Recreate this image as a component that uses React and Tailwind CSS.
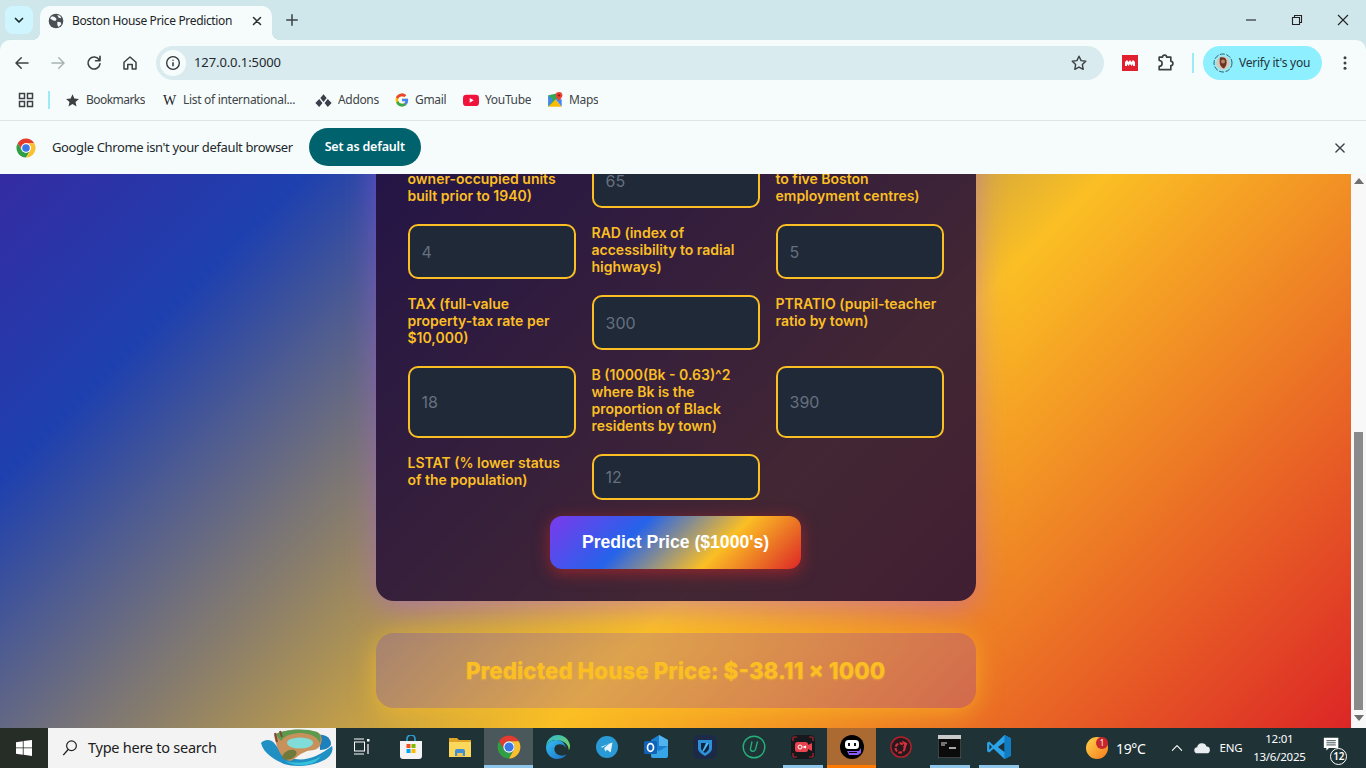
import React from "react";

const Ic = ({ s = 16, v = "0 0 24 24", children, className = "" }) => (
  <svg width={s} height={s} viewBox={v} className={`shrink-0 ${className}`}>{children}</svg>
);
const Line = ({ d, c = "#3c4043", w = 2 }) => (
  <path d={d} fill="none" stroke={c} strokeWidth={w} strokeLinecap="round" strokeLinejoin="round" />
);

const ChromeLogo = ({ s = 24 }) => (
  <Ic s={s} v="3 3 42 42">
    <path d="M41.32 14A20 20 0 0 0 6.68 14L15.34 29A10 10 0 0 1 24 14Z" fill="#e33b2e" />
    <path d="M6.68 14A20 20 0 0 0 24 44L32.66 29A10 10 0 0 1 15.34 29Z" fill="#2f9e44" />
    <path d="M41.32 14A20 20 0 0 1 24 44L32.66 29A10 10 0 0 0 24 14Z" fill="#fbc02d" />
    <circle cx="24" cy="24" r="10" fill="#fff" />
    <circle cx="24" cy="24" r="8" fill="#3b78e7" />
  </Ic>
);

const Globe = () => (
  <Ic s={16}>
    <circle cx="12" cy="12" r="11" fill="#4a4f54" />
    <path d="M6 5l4 1 3 3-2 3-4-1-4-3zM14 13l5 1 1 3-4 4-2-3z" fill="#f6fcfc" />
    <path d="M14 3l4 1 2 4-4-1z" fill="#f6fcfc" />
  </Ic>
);

const Edge = () => (
  <Ic s={26} v="0 0 48 48">
    <defs>
      <linearGradient id="e1" x1="0" y1="0" x2="1" y2="1"><stop offset="0" stopColor="#35c1f1" /><stop offset="1" stopColor="#1b6fc8" /></linearGradient>
      <linearGradient id="e2" x1="0" y1="0" x2="1" y2="1"><stop offset="0" stopColor="#2bb7d8" /><stop offset="1" stopColor="#7fd84a" /></linearGradient>
    </defs>
    <path d="M24 2C12 2 3 11 2 23c3-8 10-12 18-12 10 0 24 5 24 19 3-4 2-9 2-10C44 10 35 2 24 2z" fill="url(#e2)" />
    <path d="M2 23c-1 12 8 23 21 23 7 0 13-3 17-8-8 4-19 2-22-6-2-5 0-10 4-12 4-2 14-2 16 6 1-6-6-15-16-15C13 11 4 16 2 23z" fill="url(#e1)" />
  </Ic>
);

const Telegram = () => (
  <Ic s={22} v="0 0 24 24">
    <circle cx="12" cy="12" r="12" fill="#2a9ad6" />
    <path d="M5 12l13-5-2 11-4-3-2 2-1-4 6-5-8 4.5z" fill="#e8f5fc" />
  </Ic>
);

const Outlook = () => (
  <Ic s={26} v="0 0 26 26">
    <path d="M8 6l8-5 9 5v14a2 2 0 0 1-2 2H10a2 2 0 0 1-2-2z" fill="#1c7fd0" />
    <path d="M16 1l9 5v6h-9z" fill="#50b4ef" />
    <path d="M8 12l8 5 9-5v10a2 2 0 0 1-2 2H10a2 2 0 0 1-2-2z" fill="#35a5e8" />
    <rect x="1" y="7" width="13" height="13" rx="1.5" fill="#0f62b5" />
    <ellipse cx="7.5" cy="13.5" rx="3" ry="3.8" fill="none" stroke="#fff" strokeWidth="1.7" />
  </Ic>
);

const Shield = () => (
  <Ic s={24} v="0 0 24 24">
    <rect width="24" height="24" rx="6" fill="#1c2a48" />
    <path d="M5 5h14v8c0 4-4 6-7 8-3-2-7-4-7-8z" fill="#2b90d9" />
    <path d="M8 8h8v5c0 2-2 3.5-4 5-2-1.5-4-3-4-5z" fill="#10243f" />
    <path d="M13 8l3 0-5 8-2 1z" fill="#4fb8f2" />
  </Ic>
);

const UIcon = () => (
  <Ic s={24} v="0 0 24 24">
    <circle cx="12" cy="12" r="10.8" fill="none" stroke="#25b07a" strokeWidth="1.4" />
    <path d="M10 6.5l-1.5 7c-.5 3 3.5 4 5 1l2-8" fill="none" stroke="#25b07a" strokeWidth="1.3" />
  </Ic>
);

const Rec = () => (
  <Ic s={24} v="0 0 24 24">
    <rect width="24" height="24" rx="5" fill="#17181c" />
    <path d="M2 6V3a1 1 0 0 1 1-1h3M18 2h3a1 1 0 0 1 1 1v3M22 18v3a1 1 0 0 1-1 1h-3M6 22H3a1 1 0 0 1-1-1v-3" fill="none" stroke="#b8242f" strokeWidth="1.2" />
    <rect x="4" y="7" width="13" height="10" rx="2.5" fill="#e8434f" />
    <path d="M17 10l4-2v8l-4-2z" fill="#e8434f" />
    <circle cx="9" cy="12" r="2" fill="none" stroke="#fff" strokeWidth="1" />
    <path d="M11 12l4-1.5v3z" fill="#fff" />
  </Ic>
);

const Bot = () => (
  <Ic s={24} v="0 0 24 24">
    <circle cx="12" cy="12" r="12" fill="#000" />
    <rect x="5" y="5" width="14" height="9" rx="3.5" fill="#fff" />
    <rect x="8" y="8" width="2" height="3" fill="#111" />
    <rect x="14" y="8" width="2" height="3" fill="#111" />
    <path d="M7 16h12l2-3v5l-3 2H9z" fill="#8b5cf6" />
    <path d="M9 17.500h8" stroke="#000" strokeWidth="1" />
  </Ic>
);

const Virus = () => (
  <Ic s={22} v="0 0 24 24">
    <circle cx="12" cy="12" r="11" fill="#26191d" stroke="#b3202a" strokeWidth="1.6" />
    <circle cx="11" cy="13" r="5" fill="none" stroke="#d8303a" strokeWidth="2.4" strokeDasharray="4 1.6" />
    <path d="M13 5l6 3-2 5z" fill="#d8303a" />
  </Ic>
);

const Cmd = () => (
  <Ic s={23} v="0 0 23 23">
    <rect width="23" height="23" fill="#0b0b0b" stroke="#777" strokeWidth="1" />
    <rect width="23" height="4" fill="#c9c9c9" />
    <path d="M3 8h6M3 10h4" stroke="#ddd" strokeWidth="1.2" />
    <path d="M11 13h7" stroke="#eee" strokeWidth="1.4" />
  </Ic>
);

const VSCode = () => (
  <Ic s={26} v="0 0 24 24">
    <path d="M17 1l6 3v16l-6 3L7 13.5 3 17l-2-1V8l2-1 4 3.5z" fill="#2aa3e8" />
    <path d="M17 1l6 3v16l-6 3z" fill="#0f7cc4" />
    <path d="M17 7.5L11 12l6 4.5z" fill="#1f2f33" />
    <path d="M3.2 9.5L5.5 12l-2.3 2.5z" fill="#1f2f33" />
  </Ic>
);

const Store = () => (
  <Ic s={24} v="0 0 24 24">
    <path d="M8 6V4a4 4 0 0 1 8 0v2" fill="none" stroke="#2b9fd8" strokeWidth="1.6" />
    <path d="M1 6h22v15a3 3 0 0 1-3 3H4a3 3 0 0 1-3-3z" fill="#f4f4f4" />
    <rect x="7.5" y="9" width="4" height="4" fill="#f25022" />
    <rect x="12.5" y="9" width="4" height="4" fill="#7fba00" />
    <rect x="7.5" y="14" width="4" height="4" fill="#00a4ef" />
    <rect x="12.5" y="14" width="4" height="4" fill="#ffb900" />
  </Ic>
);

const Folder = () => (
  <Ic s={24} v="0 0 24 24">
    <path d="M1 3h8l2 2h12v17H1z" fill="#e0a526" />
    <path d="M1 7h22v15H1z" fill="#fbd75b" />
    <path d="M7 21v-5a2 2 0 0 1 2-2h6a2 2 0 0 1 2 2v5h-2.5v-3h-5v3z" fill="#3f8fd6" />
    <rect x="9.5" y="18" width="5" height="4" fill="#f4c64a" />
  </Ic>
);

const TaskView = () => (
  <Ic s={18} v="0 0 18 18">
    <path d="M1 1h10M1 16h10" stroke="#fff" strokeWidth="1" />
    <rect x="1.5" y="4" width="10" height="9" fill="none" stroke="#fff" strokeWidth="1" />
    <rect x="14" y="1" width="2.5" height="2.5" fill="#fff" />
    <path d="M15 6v10" stroke="#fff" strokeWidth="1.2" />
  </Ic>
);

const Island = () => (
  <svg width="72" height="38" viewBox="0 0 72 38" className="shrink-0">
    <path d="M0 14c5-5 11-3 14 1 4 5 8 12 20 15 12 2 24-3 37-13 2 5-2 12-10 15-12 6-28 6-38 3C14 31 2 24 0 14z" fill="#1f8fc4" />
    <path d="M24 32c10 3 26 2 36-5-4 8-16 10-24 9-5-1-9-2-12-4z" fill="#35c0dc" />
    <path d="M58 6c6-1 12 3 12 9 0 3-6 6-11 6z" fill="#1d7fbc" />
    <path d="M13 6C20 1 42 -1 56 3c6 2 6 10 2 15-4 5-10 2-14 5-8 3-10 8-15 9-7-1-13-10-16-26z" fill="#c8915c" />
    <path d="M15 5C25 0 44 -1 56 3c4 2 4 6 3 11-3-6-8-9-18-10-9 0-17 2-21 8-2-2-4-5-5-7z" fill="#5d9a4e" />
    <path d="M14 4l2 9M19 2l2 6" stroke="#7a4a3a" strokeWidth="2" />
    <ellipse cx="39" cy="14" rx="13" ry="5.500" fill="#7fdcd8" />
    <path d="M21 29c1-6 7-9 12-8 4 1 3 5 0 7-3 3-8 4-12 1z" fill="#6d7a3c" />
  </svg>
);

const GoogleG = () => (
  <Ic s={14} v="0 0 48 48">
    <path d="M44.5 20H24v8.5h11.8C34.7 33.9 30.1 37 24 37c-7.2 0-13-5.8-13-13s5.8-13 13-13c3.1 0 5.9 1.1 8.1 2.9l6.4-6.4C34.6 4.1 29.6 2 24 2 11.8 2 2 11.8 2 24s9.8 22 22 22c11 0 21-8 21-22 0-1.3-.2-2.7-.5-4z" fill="#fbbc05" />
    <path d="M3.2 14.7l7 5.1C12.1 15 17.6 11 24 11c3.1 0 5.9 1.1 8.1 2.9l6.4-6.4C34.6 4.1 29.6 2 24 2 15.6 2 8.4 6.7 3.2 14.7z" fill="#ea4335" />
    <path d="M24 46c5.5 0 10.4-1.8 14.3-5.1l-6.9-5.7C29.4 36.4 26.9 37 24 37c-5.9 0-10.9-3.8-12.6-9.2L4.2 33.3C7.6 41 15.2 46 24 46z" fill="#34a853" />
    <path d="M44.5 20H24v8.5h11.8c-.6 2.7-2.3 5-4.4 6.7l6.9 5.7C42.3 37.3 45 31.4 45 24c0-1.3-.2-2.7-.5-4z" fill="#4285f4" />
  </Ic>
);

const Maps = () => (
  <Ic s={16} v="0 0 24 24">
    <path d="M2 5l14-3v9L2 22z" fill="#34a853" />
    <path d="M2 5l7 7-7 10z" fill="#4285f4" />
    <path d="M2 22l11-11 9 11z" fill="#fbbc05" />
    <path d="M13 11l9 11V11z" fill="#4285f4" />
    <path d="M18 0a5 5 0 0 1 5 5c0 4-5 8-5 8s-5-4-5-8a5 5 0 0 1 5-5z" fill="#ea4335" />
    <circle cx="18" cy="5" r="1.8" fill="#8a1f16" />
  </Ic>
);

const Avatar = () => (
  <Ic s={20} v="0 0 20 20">
    <circle cx="10" cy="10" r="9" fill="none" stroke="#3f5a62" strokeWidth="1" strokeDasharray="5 1.5" />
    <circle cx="10" cy="10" r="6.8" fill="#d8c8b8" />
    <path d="M7 4.5c3-1 6 0 6.5 3 .6 3-.5 6-2.5 8-2-.5-3-2-4-4-.5-2-.5-5 0-7z" fill="#6b3324" />
    <circle cx="10" cy="8.5" r="2" fill="#b88467" />
  </Ic>
);

const Bookmark = ({ w, icon, label, t = "tracking-[-0.33px]" }) => (
  <div className={`flex items-center gap-[6px] ${w}`}>
    {icon}
    <span className={`truncate text-[12px] text-[#3f4447] ${t}`}>{label}</span>
  </div>
);

const taskIcons = [
  { i: <TaskView /> },
  { i: <Store /> },
  { i: <Folder /> },
  { i: <ChromeLogo s={24} />, bg: "bg-[#4a585c]", bar: "w-full bg-[#90c5ea]" },
  { i: <Edge /> },
  { i: <Telegram /> },
  { i: <Outlook /> },
  { i: <Shield /> },
  { i: <UIcon /> },
  { i: <Rec />, bar: "w-10 bg-[#90c5ea]" },
  { i: <Bot />, bg: "bg-[#ac6a33]", bar: "w-full bg-[#ff7a00]" },
  { i: <Virus /> },
  { i: <Cmd />, bar: "w-10 bg-[#90c5ea]" },
  { i: <VSCode />, bar: "w-10 bg-[#90c5ea]" },
];

const Field = ({ label, ph }) => (
  <>
    <label className="pb-1 text-[14px] font-semibold leading-[17px] text-[#fbbf24]">{label}</label>
    <input
      placeholder={ph}
      className="w-full min-w-0 rounded-[10px] border-2 border-[#fbbf24] bg-[#1f2937] px-3 py-[9px] text-[16px] text-white outline-none placeholder:text-[#667080]"
    />
  </>
);

export default function App() {
  return (
    <div className="flex h-screen w-full flex-col overflow-hidden bg-[#cfe6ea] font-['Noto_Sans',sans-serif]">
      {/* tab strip */}
      <div className="flex h-10 shrink-0 bg-[#cfe6ea]">
        <div className="ml-[5px] mt-[6px] flex h-7 w-7 items-center justify-center rounded-lg bg-[#cff6fe]">
          <Ic s={12}><Line d="M5 9l7 7 7-7" c="#1f2a30" w={3.5} /></Ic>
        </div>
        <div className="relative ml-[7px] mt-[6px] flex h-[34px] w-[232px] items-center rounded-t-[10px] bg-[#f6fcfc] pb-1 pl-2 pr-2">
          <div className="absolute bottom-0 -left-2 h-2 w-2 bg-[radial-gradient(circle_at_0_0,transparent_8px,#f6fcfc_8px)]" />
          <div className="absolute bottom-0 -right-2 h-2 w-2 bg-[radial-gradient(circle_at_100%_0,transparent_8px,#f6fcfc_8px)]" />
          <Globe />
          <span className="ml-2 flex-1 truncate text-[12px] tracking-[-0.35px] text-[#1f2428]">Boston House Price Prediction</span>
          <Ic s={14}><Line d="M6 6l12 12M18 6L6 18" c="#2a2f33" w={2.6} /></Ic>
        </div>
        <div className="ml-[13px] mt-[13px] h-[14px]">
          <Ic s={14}><Line d="M12 3v18M3 12h18" c="#3c4448" w={2.6} /></Ic>
        </div>
        <div className="ml-auto flex">
          <div className="flex h-10 w-[46px] items-center justify-center pb-[1px]">
            <Ic s={12} v="0 0 12 12"><path d="M1 6h10" stroke="#222" strokeWidth="1.1" /></Ic>
          </div>
          <div className="flex h-10 w-[46px] items-center justify-center pb-[1px]">
            <Ic s={12} v="0 0 12 12"><path d="M1.5 3.5h7v7h-7zM3.5 3.5v-2h7v7h-2" fill="none" stroke="#222" strokeWidth="1.1" /></Ic>
          </div>
          <div className="flex h-10 w-[46px] items-center justify-center pb-[1px]">
            <Ic s={12} v="0 0 12 12"><path d="M1 1l10 10M11 1L1 11" stroke="#222" strokeWidth="1.1" /></Ic>
          </div>
        </div>
      </div>

      {/* toolbar */}
      <div className="flex h-11 shrink-0 items-center rounded-tl-[10px] rounded-tr-[10px] bg-[#f6fcfc] pl-1 pt-[2px]">
        <div className="flex h-9 w-9 items-center justify-center"><Ic s={18}><Line d="M20 12H5M11 5l-7 7 7 7" /></Ic></div>
        <div className="flex h-9 w-9 items-center justify-center"><Ic s={18}><Line d="M4 12h15M13 5l7 7-7 7" c="#a9b2b4" /></Ic></div>
        <div className="flex h-9 w-9 items-center justify-center"><Ic s={18}><Line d="M19 8a8 8 0 1 0 1 5M20 3v6h-6" w={2.2} /></Ic></div>
        <div className="flex h-9 w-9 items-center justify-center"><Ic s={18}><Line d="M4 11l8-7 8 7v9h-5v-6H9v6H4z" /></Ic></div>
        <div className="ml-2 flex h-[34px] w-[948px] items-center rounded-full bg-[#d9ebee] pl-[4px] pr-4">
          <div className="flex h-[26px] w-[26px] items-center justify-center rounded-full bg-[#f6fcfc]">
            <Ic s={16}>
              <circle cx="12" cy="12" r="9.5" fill="none" stroke="#2c3236" strokeWidth="2" />
              <path d="M12 11v6M12 7v1.5" stroke="#2c3236" strokeWidth="2.2" />
            </Ic>
          </div>
          <span className="ml-[8px] flex-1 text-[13px] tracking-[-0.1px] text-[#23282c]">127.0.0.1:5000</span>
          <Ic s={18}><Line d="M12 3l2.8 5.8 6.2.9-4.5 4.4 1.1 6.3L12 17.4l-5.6 3 1.1-6.3L3 9.7l6.2-.9z" w={1.9} /></Ic>
        </div>
        <div className="ml-[18px] flex h-4 w-4 items-center justify-center bg-[#e0202f]">
          <Ic s={12} v="0 0 12 12"><path d="M1 9V5l2-2 1.5 2L6 3l1.5 2L9 3l2 2v4H9V7L7.500 9 6 7 4.500 9 3 7v2z" fill="#fff" /></Ic>
        </div>
        <div className="ml-[17px]">
          <Ic s={20}><Line d="M5 5h4a2.500 2.500 0 0 1 5 0h5v5a2.500 2.500 0 0 1 0 5v5H5v-4a2.500 2.500 0 0 0 0-7z" w={2} /></Ic>
        </div>
        <div className="ml-[17px] h-5 w-[2px] bg-[#9beaf6]" />
        <div className="ml-[9px] flex h-[34px] w-[119px] items-center rounded-full bg-[#8eefff] pl-[10px]">
          <Avatar />
          <span className="ml-[6px] text-[12px] tracking-[-0.25px] text-[#23343a]">Verify it's you</span>
        </div>
        <div className="ml-[14px]">
          <Ic s={18}><circle cx="12" cy="5" r="2" fill="#3c4043" /><circle cx="12" cy="12" r="2" fill="#3c4043" /><circle cx="12" cy="19" r="2" fill="#3c4043" /></Ic>
        </div>
      </div>

      {/* bookmarks */}
      <div className="flex h-9 shrink-0 items-center bg-[#f6fcfc] pb-1 pl-[18px]">
        <Ic s={16} v="0 0 16 16">
          <path d="M1.500 1.500h5v5h-5zM9.500 1.500h5v5h-5zM1.500 9.500h5v5h-5zM9.500 9.500h5v5h-5z" fill="none" stroke="#3c4043" strokeWidth="1.500" />
        </Ic>
        <div className="ml-[14px] h-[18px] w-[2px] bg-[#9beaf6]" />
        <div className="ml-[15px] flex">
          <Bookmark w="w-[97px]" t="tracking-[-0.55px]" icon={<Ic s={15}><path d="M12 2l3 6.800 7.200.7-5.400 4.800 1.600 7.100L12 17.700l-6.400 3.700 1.600-7.100L1.800 9.500 9 8.800z" fill="#3c4043" /></Ic>} label="Bookmarks" />
          <div className="flex w-[153px] items-center gap-[6px]">
            <span className="w-[15px] text-center font-['Liberation_Serif',serif] text-[14px] text-[#202124]">W</span>
            <span className="truncate text-[12px] tracking-[-0.3px] text-[#3f4447]">List of international...</span>
          </div>
          <Bookmark w="w-[80px]" icon={<Ic s={17} v="0 0 24 24"><path d="M12 3l4.500 5.500L12 14 7.500 8.500zM6 10l4.500 5.500L6 21 .5 15.500zM18 10l5.500 5.500L18 21l-4.500-5.500z" fill="#3b3f4c" /></Ic>} label="Addons" />
          <Bookmark w="w-[68px]" icon={<GoogleG />} label="Gmail" />
          <Bookmark w="w-[84px]" icon={<Ic s={16}><rect x="0" y="4" width="24" height="17" rx="5" fill="#f0133c" /><path d="M10 9l6 3.500-6 3.500z" fill="#fff" /></Ic>} label="YouTube" />
          <Bookmark w="w-[60px]" icon={<Maps />} label="Maps" />
        </div>
      </div>

      {/* info bar */}
      <div className="flex h-[54px] shrink-0 items-center border-t border-[#dfe5e6] bg-[#f6fcfc] pl-4 pr-[19px]">
        <ChromeLogo s={20} />
        <span className="ml-4 text-[13px] tracking-[-0.37px] text-[#23282c]">Google Chrome isn't your default browser</span>
        <div className="ml-4 mb-[2px] flex h-[38px] w-[112px] items-center justify-center rounded-full bg-[#00626d]">
          <span className="pt-[1px] text-[12.5px] font-semibold tracking-[-0.2px] text-white">Set as default</span>
        </div>
        <div className="ml-auto">
          <Ic s={14}><Line d="M5 5l14 14M19 5L5 19" c="#3c4448" w={2.4} /></Ic>
        </div>
      </div>

      {/* viewport */}
      <div className="flex min-h-0 flex-1">
        <main className="flex min-w-0 flex-1 flex-col items-center justify-end overflow-hidden bg-[linear-gradient(135deg,#580a8c,#1e40af,#fbbf24,#dc2626)] bg-size-[1351px_1048px] bg-position-[0_-494px] pb-5 font-['Inter',sans-serif]">
          <div className="w-[600px] shrink-0 rounded-[18px] bg-[rgba(34,12,54,0.85)] p-8 shadow-[0_8px_32px_rgba(168,85,247,0.45)]">
            <div className="grid grid-cols-3 gap-4">
              <Field label="AGE (proportion of owner-occupied units built prior to 1940)" ph="65" />
              <Field label={<>DIS (weighted distances<br />to five Boston employment centres)</>} ph="4" />
              <Field label="RAD (index of accessibility to radial highways)" ph="5" />
              <Field label="TAX (full-value property-tax rate per $10,000)" ph="300" />
              <Field label="PTRATIO (pupil-teacher ratio by town)" ph="18" />
              <Field label="B (1000(Bk - 0.63)^2 where Bk is the proportion of Black residents by town)" ph="390" />
              <Field label="LSTAT (% lower status of the population)" ph="12" />
            </div>
            <div className="mt-4 flex justify-center">
              <button className="rounded-xl bg-[linear-gradient(135deg,#7c3aed,#2563eb,#fbbf24,#dc2626)] px-8 py-4 font-['Liberation_Sans',sans-serif] text-[17.6px] font-bold leading-[21px] text-white shadow-[0_4px_16px_rgba(220,38,38,0.55)]">
                Predict Price ($1000's)
              </button>
            </div>
          </div>
          <div className="mt-8 w-[600px] shrink-0 rounded-[18px] bg-[rgba(135,80,200,0.25)] py-[23px] text-center text-[22.4px] font-extrabold leading-[29px] text-[#fbbf24] shadow-[0_4px_24px_rgba(251,191,36,0.6)] [text-shadow:0_1px_2px_rgba(251,191,36,0.5)]">
            Predicted House Price: $-38.11 × 1000
          </div>
        </main>
        <div className="flex w-[15px] shrink-0 flex-col items-center bg-[#f8f8f8] pt-[4px]">
          <div className="h-0 w-0 border-x-[5px] border-b-[6px] border-x-transparent border-b-[#6e6e6e]" />
          <div className="mt-[248px] h-[278px] w-[9px] bg-[#8a8a8a]" />
          <div className="mt-[5px] h-0 w-0 border-x-[5px] border-t-[6px] border-x-transparent border-t-[#6e6e6e]" />
        </div>
      </div>

      {/* taskbar */}
      <div className="flex h-10 shrink-0 items-stretch bg-[#1f3337] text-white">
        <div className="flex w-12 items-center justify-center bg-[#262c26]">
          <Ic s={16} v="0 0 16 16"><path d="M0 2.200L6.800 1.200V7.500H0zM7.600 1.100L16 0V7.500H7.600zM0 8.300H6.800V14.700L0 13.800zM7.600 8.300H16V16L7.600 14.800z" fill="#fff" /></Ic>
        </div>
        <div className="flex w-[288px] items-center bg-[#f3f3f3] pl-[13px] pr-[3px]">
          <Ic s={18}>
            <circle cx="14" cy="9" r="6.500" fill="none" stroke="#222" strokeWidth="1.600" />
            <path d="M9.500 14L3 21.500" stroke="#222" strokeWidth="1.800" />
          </Ic>
          <span className="ml-[9px] flex-1 text-[14.5px] tracking-[-0.25px] text-[#202020]">Type here to search</span>
          <Island />
        </div>
        <div className="ml-[1px] flex">
          {taskIcons.map((t, n) => (
            <div key={n} className={`flex w-[49px] flex-col items-center ${t.bg || ""}`}>
              <div className="flex min-h-0 w-full flex-1 items-center justify-center">{t.i}</div>
              <div className={`h-[3px] ${t.bar || ""}`} />
            </div>
          ))}
        </div>
        <div className="relative ml-[63px] flex items-center">
          <div className="h-[22px] w-[22px] rounded-full bg-[linear-gradient(135deg,#ffd24a,#f57c1f)]" />
          <div className="absolute left-[10px] top-[9px] flex h-[12px] w-[12px] items-center justify-center rounded-full bg-[#c8252c] text-[8px] text-white">1</div>
        </div>
        <div className="ml-[8px] flex items-center text-[14px] tracking-[-0.35px]">19°C</div>
        <div className="ml-[25px] flex items-center">
          <Ic s={14}><Line d="M4 16l8-8 8 8" c="#fff" w={1.800} /></Ic>
        </div>
        <div className="ml-[9px] flex items-center">
          <Ic s={18}><path d="M6 19a4 4 0 0 1-.5-8A6.500 6.500 0 0 1 18 10a4.500 4.500 0 0 1 0 9z" fill="#e8eef0" /></Ic>
        </div>
        <div className="ml-[8px] flex items-center text-[11.5px] tracking-[-0.2px]">ENG</div>
        <div className="ml-[10px] flex w-[54px] flex-col items-center justify-center text-[11.5px] leading-[18px] tracking-[-0.25px]">
          <span>12:01</span>
          <span>13/6/2025</span>
        </div>
        <div className="relative ml-[17px] flex w-[28px] items-center">
          <Ic s={17} v="0 0 20 20" className="mb-[8px]">
            <path d="M1 2h17v12H7l-3 3v-3H1z" fill="#fff" />
            <path d="M4 5.500h11M4 8h11M4 10.500h11" stroke="#1f3337" strokeWidth="1" />
          </Ic>
          <div className="absolute left-[7px] top-[20px] flex h-[17px] w-[17px] items-center justify-center rounded-full border border-white bg-[#1f3337] text-[10px] font-semibold">12</div>
        </div>
      </div>
    </div>
  );
}
